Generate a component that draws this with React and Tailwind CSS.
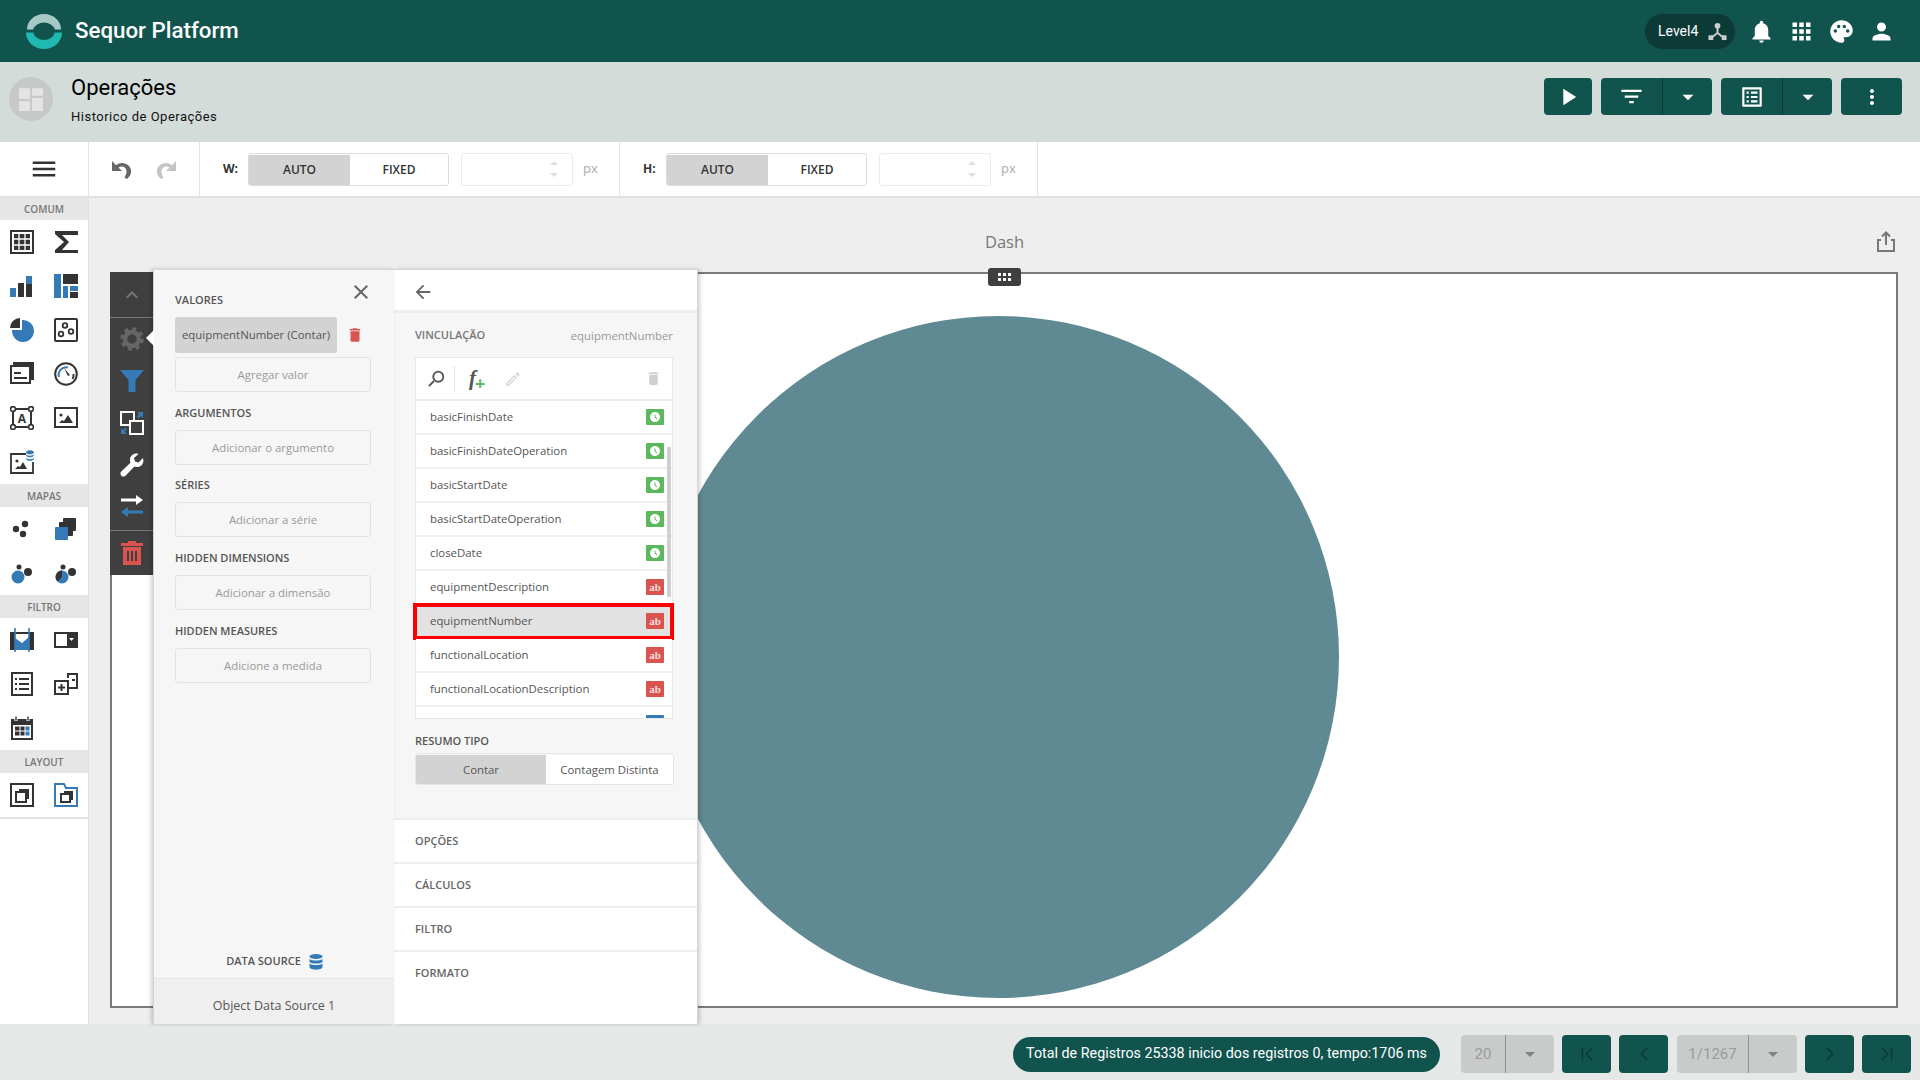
import {
  MdNotifications, MdApps, MdPalette, MdPerson, MdPlayArrow, MdFilterList, MdArrowDropDown, MdMoreVert,
  MdOutlineListAlt, MdMenu, MdClose, MdArrowBack, MdKeyboardArrowUp, MdSearch, MdOutlineEdit, MdAccessTimeFilled, MdDelete,
} from "react-icons/md";
import { ChevronFirst, ChevronLast, ChevronLeft, ChevronRight } from "lucide-react";

const DARK = "#333333";
const BLUE = "#337ab7";

// dashboard designer item icons, all on a 24 box
const Svg = ({ children, className = "h-6 w-6" }) => (
  <svg viewBox="0 0 24 24" className={className}>{children}</svg>
);

const GridIcon = () => (
  <Svg>
    <rect x="1" y="1" width="22" height="22" fill="none" stroke={DARK} strokeWidth="2" />
    <path d="M4 4h16v16H4z" fill={DARK} />
    <path d="M9 4v16M15 4v16M4 9h16M15 9M4 15h16" stroke="#fff" strokeWidth="1.3" />
  </Svg>
);
const SigmaIcon = () => (
  <Svg><path d="M1 1h23v4H8l7 7-7 8h16v3H1v-3l9-8L1 4z" fill={DARK} /></Svg>
);
const BarsIcon = () => (
  <Svg>
    <rect x="0" y="14" width="6" height="9" fill={BLUE} />
    <rect x="8" y="9" width="6" height="14" fill={DARK} />
    <rect x="16" y="2" width="6" height="8" fill={BLUE} />
    <rect x="16" y="10" width="6" height="13" fill={DARK} />
  </Svg>
);
const TreemapIcon = () => (
  <Svg>
    <rect x="0" y="0" width="7" height="24" fill={BLUE} />
    <rect x="9" y="0" width="15" height="10" fill={DARK} />
    <rect x="9" y="12" width="5" height="12" fill={BLUE} />
    <rect x="16" y="12" width="8" height="5" fill={BLUE} />
    <rect x="16" y="18" width="8" height="6" fill={DARK} />
  </Svg>
);
const PieIcon = () => (
  <Svg>
    <path d="M10 0v10H0A10 10 0 0 1 10 0z" fill={DARK} />
    <path d="M12 2a11 11 0 1 1-10 10h10z" fill={BLUE} />
  </Svg>
);
const ScatterIcon = () => (
  <Svg>
    <rect x="1" y="1" width="22" height="22" fill="none" stroke={DARK} strokeWidth="2" rx="1" />
    <circle cx="11" cy="7.500" r="2.300" fill="none" stroke={DARK} strokeWidth="1.800" />
    <circle cx="7" cy="16" r="2.300" fill="none" stroke={DARK} strokeWidth="1.800" />
    <circle cx="17" cy="13.500" r="2.300" fill="none" stroke={DARK} strokeWidth="1.800" />
  </Svg>
);
const CardsIcon = () => (
  <Svg>
    <path d="M3 0h21v18h-3V3H3z" fill={DARK} />
    <rect x="1" y="4" width="19" height="17" fill="#fff" stroke={DARK} strokeWidth="2" />
    <path d="M4 10h7v2H4zM4 15h13v2H4z" fill={DARK} />
  </Svg>
);
const GaugeIcon = () => (
  <Svg>
    <circle cx="12" cy="12" r="10.800" fill="none" stroke={DARK} strokeWidth="2" />
    <path d="M5 15a7.500 7.500 0 0 1 9-9.500" fill="none" stroke={BLUE} strokeWidth="2" />
    <path d="M18.500 17a8 8 0 0 0 1-5" fill="none" stroke={DARK} strokeWidth="2" />
    <path d="M10 6l6 7-2 1z" fill={DARK} />
  </Svg>
);
const TextBoxIcon = () => (
  <Svg>
    <rect x="3" y="3" width="18" height="18" fill="none" stroke={DARK} strokeWidth="2" />
    {[3, 21].map((x) => [3, 21].map((y) => (
      <circle key={`${x}-${y}`} cx={x} cy={y} r="2.400" fill="#fff" stroke={DARK} strokeWidth="1.600" />
    )))}
    <text x="12" y="16.500" textAnchor="middle" fontSize="12" fontWeight="700" fontFamily="Open Sans, sans-serif" fill={DARK}>A</text>
  </Svg>
);
const ImageIcon = () => (
  <Svg>
    <rect x="1" y="2" width="22" height="19" fill="none" stroke={DARK} strokeWidth="2" />
    <circle cx="7" cy="9" r="1.600" fill={DARK} />
    <path d="M5 17l3-3 2 1 4-6 5 8z" fill={DARK} />
  </Svg>
);
const BoundImageIcon = () => (
  <Svg>
    <path d="M16 4H1v19h22V12" fill="none" stroke={DARK} strokeWidth="1.800" />
    <circle cx="7" cy="11" r="1.600" fill={DARK} />
    <path d="M5 19l3-3 2 1 3-5 4 7z" fill={DARK} />
    <ellipse cx="20" cy="2.200" rx="3.800" ry="2" fill={BLUE} />
    <path d="M16.200 4v1.500c0 2.400 7.600 2.400 7.600 0V4c0 2.200-7.600 2.200-7.600 0zM16.200 7.600v1.400c0 2.400 7.600 2.400 7.600 0V7.600c0 2.200-7.600 2.200-7.600 0z" fill={BLUE} />
  </Svg>
);
const MapDotsIcon = () => (
  <Svg>
    <circle cx="6" cy="12" r="3.200" fill={DARK} />
    <circle cx="15" cy="7" r="3.200" fill={DARK} />
    <circle cx="13" cy="17" r="3.200" fill={DARK} />
  </Svg>
);
const ChoroplethIcon = () => (
  <Svg>
    <rect x="9" y="1" width="13" height="13" rx="1" fill={DARK} />
    <rect x="5" y="5" width="14" height="14" rx="1" fill={DARK} />
    <rect x="1" y="10" width="13" height="13" rx="1" fill={BLUE} />
  </Svg>
);
const BubbleIcon = () => (
  <Svg>
    <circle cx="8" cy="16" r="6.500" fill={BLUE} />
    <circle cx="18" cy="11" r="4" fill={DARK} />
    <circle cx="9" cy="6" r="2.500" fill={DARK} />
  </Svg>
);
const PieMapIcon = () => (
  <Svg>
    <circle cx="8" cy="16" r="6.500" fill={BLUE} />
    <path d="M8 16V9.500A6.500 6.500 0 0 0 3.500 20.500z" fill={DARK} />
    <circle cx="18" cy="11" r="4" fill={DARK} />
    <circle cx="9" cy="6" r="2.500" fill={DARK} />
  </Svg>
);
const RangeIcon = () => (
  <Svg>
    <rect x="0" y="4" width="24" height="18" fill={DARK} />
    <rect x="5" y="6" width="14" height="16" fill="#fff" />
    <path d="M5 22v-12l7 5 7-6v13z" fill={BLUE} />
    <path d="M5 0v24M19 0v24" stroke={BLUE} strokeWidth="1.600" />
  </Svg>
);
const ComboIcon = () => (
  <Svg>
    <rect x="1" y="5" width="22" height="14" fill="none" stroke={DARK} strokeWidth="2" />
    <rect x="13" y="6" width="9" height="12" fill={DARK} />
    <path d="M15 10h5l-2.500 3z" fill="#fff" />
  </Svg>
);
const ListIcon = () => (
  <Svg>
    <rect x="2" y="1" width="20" height="22" fill="none" stroke={DARK} strokeWidth="2" />
    <path d="M5 6h2v2H5zM5 11h2v2H5zM5 16h2v2H5zM9 6h10v2H9zM9 11h10v2H9zM9 16h10v2H9z" fill={DARK} />
  </Svg>
);
const TreeIcon = () => (
  <Svg>
    <path d="M14 6V2h9v14h-9" fill="none" stroke={DARK} strokeWidth="2" />
    <rect x="1" y="9" width="13" height="13" fill="none" stroke={DARK} strokeWidth="2" />
    <path d="M4 15.500h7M7.500 12v7" stroke={DARK} strokeWidth="2" />
    <path d="M18 7h3v2h-3z" fill={DARK} />
  </Svg>
);
const DateIcon = () => (
  <Svg>
    <path d="M1 3h22v21H1z" fill={DARK} />
    <rect x="3" y="9" width="18" height="13" fill="#fff" />
    <path d="M5 10.500h4.500v4H5zM10.500 10.500h4v4h-4zM5 15.500h4.500v4H5zM10.500 15.500h4v4h-4z" fill={DARK} />
    <path d="M15.500 10.500h4v4h-4zM15.500 15.500h4v4h-4z" fill={BLUE} />
    <path d="M6 0v5M18 0v5" stroke="#fff" strokeWidth="3" />
    <path d="M6 .500v4M18 .500v4" stroke={DARK} strokeWidth="1.400" />
  </Svg>
);
const GroupIcon = () => (
  <Svg>
    <rect x="1" y="1" width="22" height="22" fill="none" stroke={DARK} strokeWidth="2" />
    <path d="M9 6h10v10h-3V9H9z" fill={DARK} />
    <rect x="6" y="9" width="10" height="10" fill="#fff" stroke={DARK} strokeWidth="2" />
  </Svg>
);
const TabIcon = () => (
  <Svg>
    <path d="M1 1h9l2 4h11v18H1z" fill="none" stroke={BLUE} strokeWidth="2" />
    <path d="M10 8h9v9h-3v-6h-6z" fill={DARK} />
    <rect x="7" y="11" width="9" height="8" fill="#fff" stroke={DARK} strokeWidth="2" />
  </Svg>
);
const UndoIcon = ({ className }) => (
  <svg viewBox="0 0 24 24" className={`h-6 w-6 ${className}`} fill="currentColor">
    <path d="M2 4v10h10l-3.500-3.500c2-1.500 4.500-1.500 6.300 0 2.200 2 2.300 5 .7 8l-1 2 2.500 1.500c4.500-3.500 5.500-9 2-13-3.500-3.500-9-4-13-.8z" />
  </svg>
);

const sidebar = [
  { title: "COMUM", head: "h-[22px]", rows: 6, icons: [GridIcon, SigmaIcon, BarsIcon, TreemapIcon, PieIcon, ScatterIcon, CardsIcon, GaugeIcon, TextBoxIcon, ImageIcon, BoundImageIcon] },
  { title: "MAPAS", head: "h-[23px] pt-[2px]", rows: 2, icons: [MapDotsIcon, ChoroplethIcon, BubbleIcon, PieMapIcon] },
  { title: "FILTRO", head: "h-[23px] pt-[2px]", rows: 3, icons: [RangeIcon, ComboIcon, ListIcon, TreeIcon, DateIcon] },
  { title: "LAYOUT", head: "h-[23px] pt-[2px]", rows: 1, icons: [GroupIcon, TabIcon] },
];

const sections = [
  { title: "ARGUMENTOS", action: "Adicionar o argumento" },
  { title: "SÉRIES", action: "Adicionar a série" },
  { title: "HIDDEN DIMENSIONS", action: "Adicionar a dimensão" },
  { title: "HIDDEN MEASURES", action: "Adicione a medida" },
];

const fields = [
  ["basicFinishDate", "date"],
  ["basicFinishDateOperation", "date"],
  ["basicStartDate", "date"],
  ["basicStartDateOperation", "date"],
  ["closeDate", "date"],
  ["equipmentDescription", "text"],
  ["equipmentNumber", "text", true],
  ["functionalLocation", "text"],
  ["functionalLocationDescription", "text"],
  ["lineNumber", "number"],
];

function Logo() {
  return (
    <svg viewBox="0 0 36 35" className="h-[35px] w-9">
      <path d="M1 15.500A17 15.500 0 0 1 35 15.500h-6A11.500 10 0 0 0 7 15.500z" fill="#a9c9c6" />
      <path d="M0 18.500A18 16.500 0 0 0 36 18.500h-7A11.500 10.500 0 0 1 7 18.500z" fill="#20b9b1" />
    </svg>
  );
}

function LevelIcon() {
  return (
    <svg viewBox="0 0 20 20" className="h-[19px] w-[19px]" fill="#c9d0ce">
      <circle cx="10" cy="4" r="3" />
      <path d="M9 6h2v5l5 4-1.200 1.500L10 12.600l-4.800 3.900L4 15l5-4z" />
      <rect x=".500" y="14" width="5" height="5" />
      <rect x="14.500" y="14" width="5" height="5" />
    </svg>
  );
}

function SizeControl({ label, width, labelWidth }) {
  return (
    <div className={`flex items-center border-r border-[#e2e2e2] pl-[23px] ${width}`}>
      <span className={`text-xs font-bold text-[#333] ${labelWidth}`}>{label}</span>
      <div className="flex h-[33px] w-[201px] overflow-hidden rounded-[3px] border border-[#dcdcdc] pt-px text-xs font-semibold text-[#333]">
        <div className="flex w-[101px] items-center justify-center bg-[#d3d3d3]">AUTO</div>
        <div className="flex flex-1 items-center justify-center bg-white">FIXED</div>
      </div>
      <div className="ml-3 flex h-[33px] w-[112px] flex-col items-end justify-center gap-2 rounded-[3px] border border-[#ececec] pr-[14px]">
        <div className="h-0 w-0 border-x-[4px] border-b-[4px] border-x-transparent border-b-[#dedede]" />
        <div className="h-0 w-0 border-x-[4px] border-t-[4px] border-x-transparent border-t-[#dedede]" />
      </div>
      <span className="ml-[10px] text-[13px] text-[#aaa]">px</span>
    </div>
  );
}

function PageButton({ icon: Icon }) {
  return (
    <button type="button" className="flex h-[38px] w-[49px] items-center justify-center rounded bg-[#11544e] text-[#0b3a36]">
      <Icon size={22} strokeWidth={1.75} />
    </button>
  );
}

function PageSelect({ value, valueWidth, className = "" }) {
  return (
    <div className={`flex h-[38px] items-center rounded bg-[#c9cbca] text-[#9a9c9b] ${className}`}>
      <span className={`border-r border-[#8f9190] text-center text-[15px] leading-[38px] ${valueWidth}`}>{value}</span>
      <span className="flex w-12 justify-center"><MdArrowDropDown size={24} className="text-[#808382]" /></span>
    </div>
  );
}

function FieldRow({ name, type, selected }) {
  const badgeColor = type === "date" ? "bg-[#5cb85c]" : type === "text" ? "bg-[#d9534f]" : "bg-[#337ab7]";
  return (
    <div className={`relative flex h-[34px] shrink-0 items-center justify-between border-b-2 border-[#f0f0f0] pl-[14px] pr-[8px] ${selected ? "bg-[#e2e2e2]" : "bg-white"}`}>
      <span className="text-[11.4px] text-[#555]">{name}</span>
      <span className={`flex h-[16px] w-[18px] items-center justify-center rounded-[1px] text-[#f6dede] ${badgeColor}`}>
        {type === "date" && <MdAccessTimeFilled size={12} className="text-white" />}
        {type === "text" && <span className="font-['Liberation_Serif',serif] text-[11px] font-bold leading-none">ab</span>}
      </span>
      {selected && <div className="absolute -bottom-[3px] -left-[3px] -right-[2px] -top-[2px] border-4 border-[#fe0000]" />}
    </div>
  );
}

// one tool of the dark strip next to the panel
function StripTool({ height, children }) {
  return <div className={`flex w-full shrink-0 items-center justify-center ${height}`}>{children}</div>;
}

function DesignerPanel() {
  return (
    <div className="absolute bottom-0 left-[21px] top-[71px] flex font-['Open_Sans',sans-serif]">
      <div className="mt-[3px] flex h-[303px] w-[43px] flex-col items-center bg-[#3f3f3f]">
        <StripTool height="h-[45px]"><MdKeyboardArrowUp size={24} className="text-[#777]" /></StripTool>
        <div className="h-px w-full shrink-0 bg-[#777]" />
        <StripTool height="h-[42px]">
          <svg viewBox="0 0 24 24" className="h-6 w-6" fill="none" stroke="#666">
            <circle cx="12" cy="12" r="7" strokeWidth="4.500" />
            <circle cx="12" cy="12" r="10.300" strokeWidth="3" strokeDasharray="4 4.090" />
          </svg>
        </StripTool>
        <StripTool height="h-[41px]">
          <svg viewBox="0 0 24 24" className="h-6 w-6"><path d="M0 1h24l-8.500 10v12h-7V11z" fill={BLUE} /></svg>
        </StripTool>
        <StripTool height="h-[43px]">
          <svg viewBox="0 0 24 24" className="h-6 w-6">
            <rect x="1" y="1" width="13" height="13" fill="none" stroke="#fff" strokeWidth="2" />
            <rect x="10" y="10" width="13" height="13" fill="#3f3f3f" stroke="#fff" strokeWidth="2" />
            <path d="M17 1h6v6l-2-2-2.500 2.500-1.500-1.500L19 3zM1 17l2 2 2.500-2.500L7 18l-2.500 2.500L7 23H1z" fill={BLUE} />
          </svg>
        </StripTool>
        <StripTool height="h-[41px]">
          <svg viewBox="0 0 24 24" className="h-6 w-6">
            <path d="M23 5l-4.500 4.500-3.500-1-1-3.500L18.500 1C14.500-.5 9.500 2.500 10 8c.1.600.3 1.200.5 1.700L1.300 18.500c-1.200 1.200-1.200 3 0 4.200s3 1.200 4.200 0l8.900-9.100c.5.200 1 .3 1.600.4 5.500.5 8.500-4.500 7-8.500z" fill="#fff" />
          </svg>
        </StripTool>
        <StripTool height="h-[41px]">
          <svg viewBox="0 0 24 24" className="h-6 w-6">
            <path d="M1 4.500h15V1l7 5-7 5V7.500H1z" fill="#fff" />
            <path d="M23 16.500H8V13l-7 5 7 5v-3.500h15z" fill={BLUE} />
          </svg>
        </StripTool>
        <div className="mt-[4px] h-px w-full shrink-0 bg-[#777]" />
        <StripTool height="h-[44px]">
          <svg viewBox="0 0 24 24" className="h-6 w-6">
            <path d="M8 0h8v2h7v3H1V2h7zM3 6h18v18H3zM7 10v10h2V10zM11 10v10h2V10zM15 10v10h2V10z" fill="#d9534f" fillRule="evenodd" />
          </svg>
        </StripTool>
      </div>

      <div className="relative flex w-[241px] flex-col border-l border-t border-[#d5d5d5] bg-[#f6f6f6] shadow-[-2px_0_4px_rgba(0,0,0,0.18)]">
        {/* pointer to the gear tab */}
        <div className="absolute -left-[8px] top-[60px] h-0 w-0 border-y-[8px] border-r-[8px] border-y-transparent border-r-white" />
        <MdClose size={24} className="absolute right-[21px] top-[10px] text-[#666]" />
        <div className="flex-1 px-[21px] pt-[22px]">
          <h4 className="text-[11px] font-semibold leading-4 text-[#555]">VALORES</h4>
          <div className="mt-[9px] flex items-center">
            <div className="flex h-9 w-[162px] items-center justify-center rounded-[3px] bg-[#d3d3d3] text-[11.4px] text-[#555]">equipmentNumber (Contar)</div>
            <MdDelete size={18} className="ml-[9px] text-[#d9534f]" />
          </div>
          <button type="button" className="mt-1 h-[35px] w-[196px] rounded-[3px] border border-[#e3e3e3] text-[11.4px] text-[#999]">Agregar valor</button>
          {sections.map((s) => (
            <div key={s.title} className="mt-[12.7px]">
              <h4 className="text-[11px] font-semibold leading-4 text-[#555]">{s.title}</h4>
              <button type="button" className="mt-[9px] h-[35px] w-[196px] rounded-[3px] border border-[#e3e3e3] text-[11.4px] text-[#999]">{s.action}</button>
            </div>
          ))}
        </div>
        <div className="flex h-[38px] items-center justify-center gap-[8px] border-b border-[#e3e3e3] pl-px pt-1 text-[11px] font-semibold text-[#555]">
          DATA SOURCE
          <svg viewBox="0 0 14 16" className="h-4 w-[14px]" fill={BLUE}>
            <ellipse cx="7" cy="2.500" rx="6.500" ry="2.500" />
            <path d="M.500 4.500c0 2.700 13 2.700 13 0v3c0 2.700-13 2.700-13 0zM.500 9c0 2.700 13 2.700 13 0v4c0 3.500-13 3.500-13 0z" />
          </svg>
        </div>
        <div className="flex h-[45px] items-center justify-center bg-[#efefef] pt-[9px] text-[12.500px] text-[#555]">Object Data Source 1</div>
      </div>

      <div className="flex w-[304px] flex-col border-r border-t border-[#d5d5d5] bg-white shadow-[2px_0_4px_rgba(0,0,0,0.18)]">
        <div className="flex h-[43px] shrink-0 items-center border-b-[3px] border-[#eeeeee] pl-[18px] pt-1">
          <MdArrowBack size={22} className="text-[#666]" />
        </div>
        <div className="h-[505px] shrink-0 bg-[#f6f6f6] pl-[21px] pr-[24px]">
          <div className="flex h-[44px] items-center justify-between pt-px">
            <h4 className="text-[11px] font-semibold text-[#777]">VINCULAÇÃO</h4>
            <span className="text-[11.4px] text-[#999]">equipmentNumber</span>
          </div>
          <div className="flex h-[362px] flex-col border border-[#e8e8e8]">
            <div className="flex h-[43px] shrink-0 items-center border-b-2 border-[#eeeeee] bg-white pl-[9px] pr-[10px]">
              <MdSearch size={22} className="-scale-x-100 text-[#555]" />
              <div className="ml-[7px] h-[26px] w-px bg-[#e2e2e2]" />
              <span className="ml-[14px] font-['Liberation_Serif',serif] text-[21px] font-bold italic leading-none text-[#555]">f</span>
              <span className="-ml-px mt-2 text-lg font-bold leading-none text-[#5cb85c]">+</span>
              <MdOutlineEdit size={18} className="ml-[19px] text-[#d8d8d8]" />
              <MdDelete size={17} className="ml-auto text-[#cfcfcf]" />
            </div>
            <div className="relative min-h-0 flex-1 [clip-path:inset(0_-6px_0_-6px)]">
              {fields.map(([name, type, selected]) => (
                <FieldRow key={name} name={name} type={type} selected={selected} />
              ))}
              <div className="absolute right-[1px] top-[46px] h-[150px] w-1 bg-[#d0d0d0]" />
            </div>
          </div>
          <h4 className="mt-[14px] text-[11px] font-semibold leading-4 text-[#555]">RESUMO TIPO</h4>
          <div className="mt-[4px] flex h-8 w-[259px] overflow-hidden rounded-[3px] border border-[#e6e6e6] pt-px text-[11.4px] text-[#555]">
            <div className="flex w-[130px] items-center justify-center bg-[#d3d3d3]">Contar</div>
            <div className="flex flex-1 items-center justify-center bg-white">Contagem Distinta</div>
          </div>
        </div>
        {["OPÇÕES", "CÁLCULOS", "FILTRO", "FORMATO"].map((t) => (
          <div key={t} className="flex h-[44px] shrink-0 items-center border-t-2 border-[#eeeeee] pl-[21px] text-[11px] font-semibold text-[#666]">{t}</div>
        ))}
      </div>
    </div>
  );
}

export default function App() {
  return (
    <div className="flex h-screen flex-col overflow-hidden bg-[#eeeeee] font-['Roboto',sans-serif]">
      <header className="flex h-[62px] shrink-0 items-center bg-[#11544e] pl-[26px] pr-[25px] text-white">
        <Logo />
        <span className="ml-[13px] text-[22.3px] font-medium">Sequor Platform</span>
        <div className="ml-auto flex items-center">
          <div className="flex h-[35px] w-[90px] items-center gap-[10px] rounded-full bg-[#0c3a36] pl-[13px] text-sm">
            Level4 <LevelIcon />
          </div>
          <MdNotifications size={27} className="ml-[13px]" />
          <MdApps size={27} className="ml-[13px]" />
          <MdPalette size={27} className="ml-[13px]" />
          <MdPerson size={27} className="ml-[13px]" />
        </div>
      </header>

      <div className="flex h-[80px] shrink-0 bg-[#d3dcd9] pl-[9px] pr-[18px]">
        <div className="mt-[15px] flex h-11 w-11 items-center justify-center rounded-full bg-[#c6c9c8]">
          <svg viewBox="0 0 24 24" className="h-[26px] w-[26px]" fill="#e4e4e4">
            <path d="M1 2h10v10H1zM13 2h10v7H13zM13 11h10v12H13zM1 14h10v9H1z" />
          </svg>
        </div>
        <div className="ml-[18px] mt-3">
          <h1 className="text-[22px] leading-7 text-black">Operações</h1>
          <p className="mt-[7px] text-[13px] leading-4 tracking-[0.5px] text-[#111]">Historico de Operações</p>
        </div>
        <div className="ml-auto mt-4 flex h-[37px] gap-[9px] text-white">
          <button type="button" className="flex w-12 items-center justify-center rounded bg-[#11544e]"><MdPlayArrow size={28} /></button>
          <div className="flex w-[111px] rounded bg-[#11544e]">
            <span className="flex w-[62px] items-center justify-center border-r border-[#0b3a36]"><MdFilterList size={27} /></span>
            <span className="flex flex-1 items-center justify-center"><MdArrowDropDown size={26} /></span>
          </div>
          <div className="flex w-[111px] rounded bg-[#11544e]">
            <span className="flex w-[62px] items-center justify-center border-r border-[#0b3a36]"><MdOutlineListAlt size={26} /></span>
            <span className="flex flex-1 items-center justify-center"><MdArrowDropDown size={26} /></span>
          </div>
          <button type="button" className="flex w-[61px] items-center justify-center rounded bg-[#11544e]"><MdMoreVert size={24} /></button>
        </div>
      </div>

      <div className="flex h-[56px] shrink-0 border-b-2 border-[#e0e0e0] bg-white font-['Open_Sans',sans-serif]">
        <div className="flex w-[89px] items-center justify-center border-r border-[#e2e2e2]"><MdMenu size={30} className="text-[#333]" /></div>
        <div className="flex w-[111px] items-center justify-center gap-5 border-r border-[#e2e2e2]">
          <UndoIcon className="text-[#666]" />
          <UndoIcon className="-scale-x-100 text-[#c4c4c4]" />
        </div>
        <SizeControl label="W:" width="w-[420px]" labelWidth="w-[25px]" />
        <SizeControl label="H:" width="w-[418px]" labelWidth="w-[23px]" />
      </div>

      <div className="flex min-h-0 flex-1">
        <aside className="flex w-[89px] shrink-0 flex-col border-r border-[#e2e2e2] bg-white font-['Open_Sans',sans-serif]">
          {sidebar.map((group) => (
            <div key={group.title}>
              <div className={`flex items-center justify-center bg-[#e6e6e6] text-[10px] font-semibold text-[#777] ${group.head}`}>{group.title}</div>
              <div className="grid grid-cols-2 items-center justify-items-center" style={{ gridTemplateRows: `repeat(${group.rows}, 44px)` }}>
                {group.icons.map((Icon, i) => <Icon key={i} />)}
              </div>
            </div>
          ))}
          <div className="h-[2px] bg-[#e2e2e2]" />
        </aside>

        <main className="relative flex min-w-0 flex-1 flex-col font-['Open_Sans',sans-serif]">
          <div className="relative flex h-[74px] shrink-0 items-center justify-center pt-[14px] text-[16.500px] text-[#777]">
            Dash
            <svg viewBox="0 0 20 22" className="absolute right-[24px] top-[33px] h-[22px] w-[20px]" fill="none" stroke="#777" strokeWidth="2">
              <path d="M5 9H2v11h16V9h-3M10 14V2M6 5.500L10 1.500l4 4" />
            </svg>
          </div>
          <div className="relative mb-4 ml-[21px] mr-[22px] flex flex-1 items-center justify-center border-2 border-[#7a7a7a] bg-white pr-[12px] pt-[34px]">
            <svg viewBox="0 0 682 682" className="h-[682px] w-[682px]"><circle cx="341" cy="341" r="341" fill="#5f8a94" /></svg>
            <div className="absolute -top-[6px] left-[876px] flex h-[18px] w-[33px] flex-wrap content-center justify-center gap-[2px] rounded-[3px] bg-[#3f3f3f] px-[10px]">
              {[0, 1, 2, 3, 4, 5].map((i) => <span key={i} className="h-[3px] w-[3px] bg-white" />)}
            </div>
          </div>
          <DesignerPanel />
        </main>
      </div>

      <footer className="flex h-[56px] shrink-0 items-center justify-end gap-2 bg-[#e6e8e7] pr-[9px] pt-1">
        <div className="mr-[13px] flex h-[35px] w-[427px] items-center justify-center rounded-full bg-[#11544e] text-[14.300px] text-white">
          Total de Registros 25338 inicio dos registros 0, tempo:1706 ms
        </div>
        <PageSelect value="20" valueWidth="w-[45px]" />
        <PageButton icon={ChevronFirst} />
        <PageButton icon={ChevronLeft} />
        <PageSelect value="1/1267" valueWidth="w-[72px]" className="ml-px" />
        <PageButton icon={ChevronRight} />
        <PageButton icon={ChevronLast} />
      </footer>
    </div>
  );
}
